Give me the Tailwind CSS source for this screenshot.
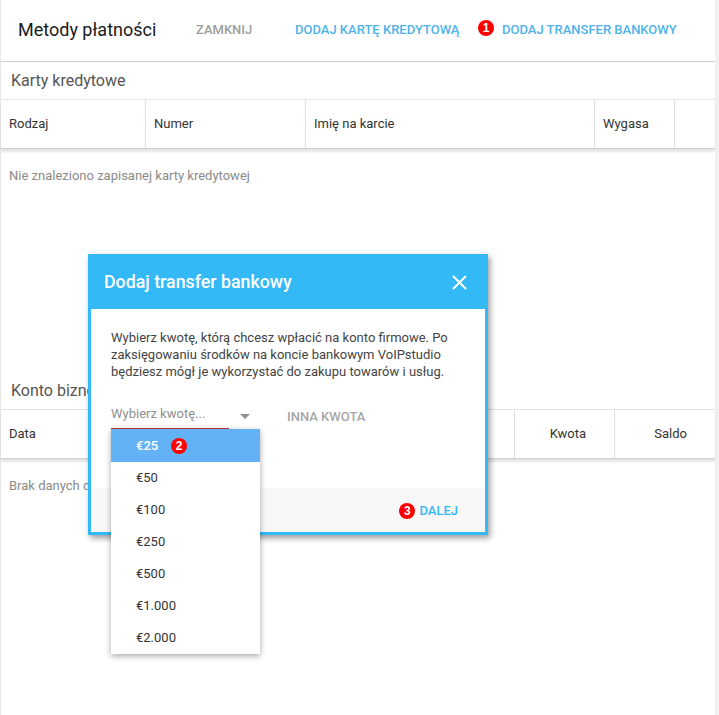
<!DOCTYPE html>
<html lang="pl">
    <head>
        <meta charset="UTF-8">
        <title>Metody płatności</title>
        <script src="https://cdn.jsdelivr.net/npm/@tailwindcss/browser@4"></script>
    </head>
    <body class="bg-white font-['Roboto',sans-serif] overflow-hidden">
        <div class="relative w-[719px] h-[715px] overflow-hidden bg-[#f1f1f1]">
            <div class="w-[715px] h-[715px] bg-white border-l border-[#e8e8e8] flex flex-col">
                <!-- header -->
                <div class="h-[62px] shrink-0 flex items-center pb-[2px] border-b border-[#cfcfcf] text-[13px] font-medium">
                    <span class="ml-[17px] w-[178px] text-[18px] font-normal text-[#1a1a1a]">Metody płatności</span>
                    <span class="w-[99px] text-[#9e9e9e]">ZAMKNIJ</span>
                    <span class="w-[183px] text-[#4fb3ea]">DODAJ KARTĘ KREDYTOWĄ</span>
                    <span class="w-[16px] h-[16px] mr-[8px] mb-[4px] rounded-full bg-[#ff0000] text-white text-[12px] font-bold font-['Liberation_Sans',sans-serif] flex items-center justify-center">1</span>
                    <span class="text-[#4fb3ea]">DODAJ TRANSFER BANKOWY</span>
                </div>
                <!-- credit cards -->
                <div class="h-[37px] shrink-0 flex items-center pl-[10px] text-[16px] text-[#555555]">Karty kredytowe</div>
                <div class="h-[50px] shrink-0 flex items-center border-t border-b border-t-[#e4e4e4] border-b-[#d0d0d0] shadow-[0_3px_2px_rgba(0,0,0,0.1)] text-[13px] text-[#333333]">
                    <div class="w-[145px] h-full flex items-center pl-[8px] border-r border-[#e0e0e0]">Rodzaj</div>
                    <div class="w-[160px] h-full flex items-center pl-[8px] border-r border-[#e0e0e0]">Numer</div>
                    <div class="w-[289px] h-full flex items-center pl-[8px] border-r border-[#e0e0e0]">Imię na karcie</div>
                    <div class="w-[80px] h-full flex items-center pl-[8px] border-r border-[#e0e0e0]">Wygasa</div>
                </div>
                <div class="h-[223px] shrink-0 pl-[8px] pt-[19px] text-[13px] leading-[16px] text-[#8a8a8a]">Nie znaleziono zapisanej karty kredytowej</div>
                <!-- business account -->
                <div class="h-[37px] shrink-0 flex items-center pl-[10px] text-[16px] text-[#555555]">Konto biznesowe</div>
                <div class="h-[50px] shrink-0 flex items-center border-t border-b border-t-[#e4e4e4] border-b-[#d0d0d0] shadow-[0_3px_2px_rgba(0,0,0,0.1)] text-[13px] text-[#333333]">
                    <div class="w-[514px] h-full flex items-center pl-[8px] border-r border-[#e0e0e0]">Data</div>
                    <div class="w-[100px] h-full flex items-center justify-end pr-[28px] border-r border-[#e0e0e0]">Kwota</div>
                    <div class="flex-1 h-full flex items-center justify-end pr-[28px]">Saldo</div>
                </div>
                <div class="pl-[8px] pt-[19px] text-[13px] leading-[16px] text-[#8a8a8a]">Brak danych do wyświetlenia</div>
            </div>

            <!-- transfer dialog -->
            <div class="absolute left-[88px] top-[254px] w-[400px] h-[281px] border-[3px] border-t-0 border-[#33b9f6] bg-white shadow-[2px_3px_6px_rgba(0,0,0,0.4)] flex flex-col">
                <div class="h-[55px] shrink-0 bg-[#33b9f6] flex items-center justify-between pt-[2px] pl-[13px] pr-[18px] text-white text-[17.8px] font-medium">
                    <span>Dodaj transfer bankowy</span>
                    <svg width="15" height="15" viewBox="0 0 15 15" fill="none" stroke="white" stroke-width="2"><path d="M1 1L14 14M14 1L1 14"/></svg>
                </div>
                <p class="px-[20px] pt-[20px] text-[13px] leading-[17px] text-[#444444]">Wybierz kwotę, którą chcesz wpłacić na konto firmowe. Po zaksięgowaniu środków na koncie bankowym VoIPstudio będziesz mógł je wykorzystać do zakupu towarów i usług.</p>
                <div class="mt-[16px] flex items-start pl-[20px] text-[13px]">
                    <div class="w-[118px] h-[33px] flex items-center pt-[3px] border-b border-[#c9302c] text-[#8f8f8f]">
                        <span>Wybierz kwotę...</span>
                    </div>
                    <span class="mt-[11px] ml-[58px] font-medium text-[#a6a6a6]">INNA KWOTA</span>
                </div>
                <div class="mt-auto h-[44px] bg-[#f8f8f8] flex items-center justify-end pt-[2px] pr-[27px] text-[13px] font-medium text-[#33b9f6]">
                    <span class="w-[16px] h-[16px] mr-[4px] rounded-full bg-[#ff0000] text-white text-[12px] font-bold font-['Liberation_Sans',sans-serif] flex items-center justify-center">3</span>
                    <span>DALEJ</span>
                </div>
                <div class="absolute left-[149px] top-[160px] w-0 h-0 border-x-[5px] border-x-transparent border-t-[5px] border-t-[#8f8f8f]"></div>
            </div>

            <!-- amount menu -->
            <ul class="absolute left-[111px] top-[429px] w-[149px] bg-white shadow-[0_2px_6px_rgba(0,0,0,0.35)] text-[13px] text-[#333333]">
                <li class="h-[33px] pl-[25px] flex items-center bg-[#64b2f6] text-white font-medium">€25<span class="ml-[13px] mt-[1px] w-[16px] h-[16px] rounded-full bg-[#ff0000] text-white text-[12px] font-bold font-['Liberation_Sans',sans-serif] flex items-center justify-center">2</span></li>
                <li class="h-[32px] pl-[25px] flex items-center">€50</li>
                <li class="h-[32px] pl-[25px] flex items-center">€100</li>
                <li class="h-[32px] pl-[25px] flex items-center">€250</li>
                <li class="h-[32px] pl-[25px] flex items-center">€500</li>
                <li class="h-[32px] pl-[25px] flex items-center">€1.000</li>
                <li class="h-[32px] pl-[25px] flex items-center">€2.000</li>
            </ul>
        </div>
    </body>
</html>
